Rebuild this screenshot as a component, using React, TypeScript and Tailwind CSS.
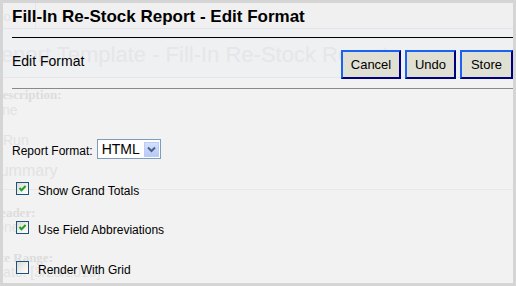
const buttons = [
  { label: "Cancel", w: "w-[60px]" },
  { label: "Undo", w: "w-[51px]" },
  { label: "Store", w: "w-[53px]" },
];

const options = [
  { label: "Show Grand Totals", checked: true, mt: "mt-[23px]" },
  { label: "Use Field Abbreviations", checked: true, mt: "mt-[23px]" },
  { label: "Render With Grid", checked: false, mt: "mt-[24px]" },
];

function Checkbox({ checked }: { checked: boolean }) {
  return (
    <span className="flex h-[13px] w-[13px] shrink-0 items-center justify-center border border-[#1c5180] bg-linear-to-br from-[#dcdcd4] to-white">
      {checked && (
        <svg width="11" height="11" viewBox="0 0 11 11">
          <path d="M2.5 5 L4.5 7.2 L8.6 3" stroke="#21a121" strokeWidth="2" fill="none" />
        </svg>
      )}
    </span>
  );
}

export default function App() {
  return (
    <div className="h-[286px] w-[516px] bg-[#d5d5d5] p-[3px] font-['Liberation_Sans',Arial,sans-serif]">
      <div className="relative h-full overflow-hidden bg-[#f2f2f2]">
        {/* report page, faded behind the dialog */}
        <div className="whitespace-nowrap text-[#e2e2e2]">
          <div className="flex h-[26px] border-b border-[#e4e4ea] bg-[#f0f0f0]">
            <div className="w-[33px] border-r border-[#e6e6e6] pt-[6px] text-[13px] leading-[16px]">
              <span className="-ml-[14px]">Info</span>
            </div>
          </div>
          <div className="h-[49px] border-b border-[#e6e6ea] bg-[#eff0f2] pt-[13px]">
            <div className="-ml-[18px] text-[22px] leading-[26px] text-[#e6e6ea]">
              Report Template - Fill-In Re-Stock Report
            </div>
          </div>
          <div className="-ml-[10px] mt-[10px] font-['Liberation_Serif',serif] text-[13px] font-bold leading-[14px] text-[#dddddd]">
            Description:
          </div>
          <div className="-ml-[19px] text-[14px] leading-[16px]">None</div>
          <div className="mt-[14px] text-[14px] leading-[16px]">Run</div>
          <div className="mt-[14px] border-b border-[#e8e8e8] pb-[9px]">
            <div className="-ml-[14px] text-[16px] leading-[18px]">Summary</div>
          </div>
          <div className="-ml-[13px] mt-[16px] font-['Liberation_Serif',serif] text-[13px] font-bold leading-[13px] text-[#dddddd]">
            Header:
          </div>
          <div className="-ml-[17px] text-[14px] leading-[16px]">None</div>
          <div className="-ml-[19px] mt-[16px] font-['Liberation_Serif',serif] text-[13px] font-bold leading-[13px] text-[#dddddd]">
            Date Range:
          </div>
          <div className="-ml-[10px] text-[14px] leading-[16px]">Date: [3/28/2010]</div>
        </div>

        {/* edit format dialog */}
        <div className="absolute inset-0 pl-[9px] text-black">
          <div className="h-[35px] border-b border-black pt-[4px] text-[17px] font-bold leading-[20px]">
            Fill-In Re-Stock Report - Edit Format
          </div>

          <div className="flex h-[51px] border-b border-[#8a8a8a]">
            <div className="mt-[15px] flex-1 text-[14px] leading-[16px]">Edit Format</div>
            <div className="mt-[12px] flex gap-[4px]">
              {buttons.map((b) => (
                <button
                  key={b.label}
                  className={`${b.w} h-[29px] border-2 border-t-[#1a62f2] border-l-[#1a62f2] border-r-[#00007f] border-b-[#00007f] bg-[#e0dfd3] text-[13px] leading-[15px]`}
                >
                  {b.label}
                </button>
              ))}
            </div>
          </div>

          <div className="mt-[50px] flex items-start">
            <span className="mt-[5px] text-[12px] leading-[14px]">Report Format:</span>
            <div className="ml-[4px] flex h-[20px] w-[64px] items-center border border-[#7f9db9] bg-white pl-[4px] pr-[1px]">
              <span className="flex-1 text-[14px] leading-[16px]">HTML</span>
              <span className="flex h-[15px] w-[15px] items-center justify-center border border-[#bccdf5] bg-linear-to-b from-[#d3e0fd] to-[#b7caf7]">
                <svg width="9" height="7" viewBox="0 0 9 7">
                  <path d="M1 1.5 L4.5 5 L8 1.5" stroke="#4d6185" strokeWidth="2" fill="none" />
                </svg>
              </span>
            </div>
          </div>

          {options.map((o) => (
            <div key={o.label} className={`${o.mt} ml-[4px] flex items-start`}>
              <Checkbox checked={o.checked} />
              <span className="ml-[9px] mt-[2px] text-[12px] leading-[14px]">{o.label}</span>
            </div>
          ))}
        </div>
      </div>
    </div>
  );
}
